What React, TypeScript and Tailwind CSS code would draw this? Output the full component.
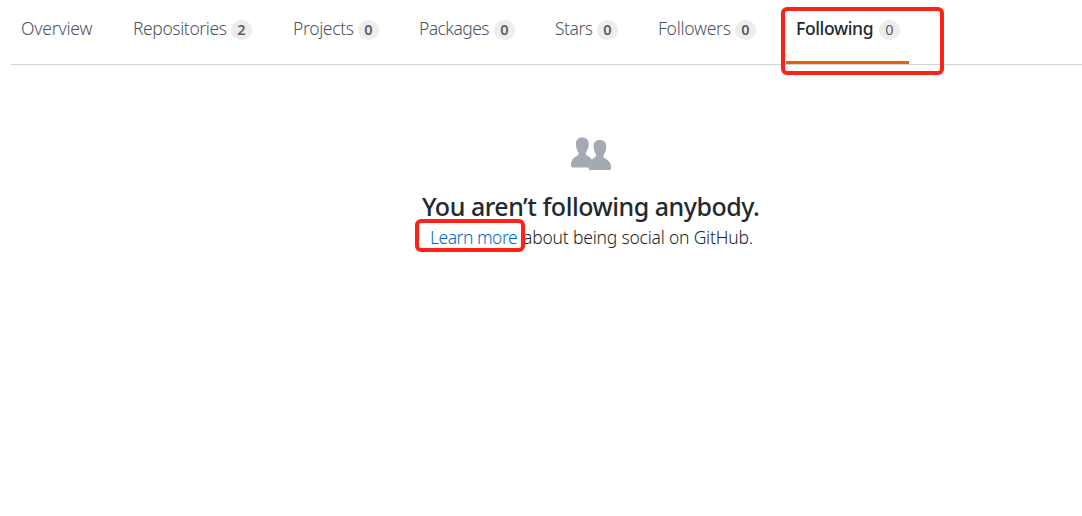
const tabs = [
  { label: 'Overview', item: 'w-[112px]', text: 'w-[73px] tracking-[-0.2px]' },
  { label: 'Repositories', count: 2, item: 'w-[160px]', text: 'w-[98px] tracking-[-0.4px]' },
  { label: 'Projects', count: 0, item: 'w-[126px]', text: 'w-[65px] tracking-[-0.35px]' },
  { label: 'Packages', count: 0, item: 'w-[136px]', text: 'w-[75px] tracking-[-0.55px]' },
  { label: 'Stars', count: 0, item: 'w-[103px]', text: 'w-[42px] tracking-[-0.5px]' },
  { label: 'Followers', count: 0, item: 'w-[128px]', text: 'w-[77px] tracking-[-0.25px]' },
];

function Counter({ value, active = false }: { value: number; active?: boolean }) {
  return (
    <span
      className={`mt-[5px] flex h-5 w-[21px] shrink-0 items-center justify-center rounded-full bg-[#ededee] pb-[2px] text-[14.5px] leading-[18px] text-[#586069] ${active ? 'font-normal' : 'font-semibold'}`}
    >
      {value}
    </span>
  );
}

function PeopleIcon() {
  return (
    <svg className="h-[34px] w-[42px]" viewBox="0 0 42 34" fill="#a3aab1">
      <path d="M12.300.6C8.300.6 6 2.900 6 7c0 3.500.7 6 2.400 8.200.5 1.700.1 2.700-1.200 3.500C3.900 20.500 1 22.500 1 28.500c0 1.400.7 2 2 2h16l3-7.700c-1.400-2.200-3.400-3.300-5-4.200-1.200-.7-1.500-1.700-1-3.400 1.700-2.200 2.700-4.700 2.700-8.200C18.700 2.900 16.300.6 12.300.6Z" />
      <path d="M29.800 3c-4 0-6.200 2.300-6.200 6.300 0 3.300.7 5.600 2.300 7.700.5 1.700.1 2.600-1.200 3.400-1 .6-1.800 1.200-2.700 2.400 0 0-3.400 3-3.400 8.200 0 1.400.7 2 2 2h18.600c1.300 0 1.900-.7 1.900-2 0-5.500-2.800-7.900-6.200-9.700-1.300-.8-1.700-1.900-1.200-3.600 1.600-2.100 2.500-4.800 2.500-8.300 0-4.100-2.300-6.400-6.400-6.400Z" />
    </svg>
  );
}

export default function App() {
  return (
    <main className="relative h-[516px] w-[1082px] overflow-hidden bg-white font-['Noto_Sans','Open_Sans',sans-serif] text-[#24292e]">
      <nav className="ml-[11px] flex h-[65px] border-b border-[#d1d5da] pl-[10px] text-[17.5px] leading-[26px] whitespace-nowrap text-[#586069]">
        {tabs.map((tab) => (
          <a key={tab.label} className={`flex shrink-0 pt-[15px] ${tab.item}`}>
            <span className={`shrink-0 font-light text-[#4b535c] ${tab.text}`}>{tab.label}</span>
            {tab.count !== undefined && <Counter value={tab.count} />}
          </a>
        ))}
        <a className="flex h-16 w-[123px] border-b-[3px] border-[#e36209] pt-[15px] pl-[10px]">
          <span className="w-[83px] shrink-0 font-medium tracking-[-0.35px] text-[#24292e]">Following</span>
          <Counter value={0} active />
        </a>
      </nav>

      <section className="flex flex-col pt-[72px]">
        <div className="ml-[570px]">
          <PeopleIcon />
        </div>
        <h3 className="mt-[17px] ml-[422px] text-[25px] leading-[36px] font-medium tracking-[-0.48px] whitespace-nowrap">
          You aren’t following anybody.
        </h3>
        <p className="ml-[430px] flex text-[17.5px] leading-[26px] font-light whitespace-nowrap">
          <a className="w-[93px] shrink-0 tracking-[-0.5px] text-[#0366d6]">Learn more</a>
          <span className="tracking-[-0.2px] text-[#1b1f23]">about being social on GitHub.</span>
        </p>
      </section>

      <div className="absolute top-[7px] left-[781px] h-[68px] w-[163px] rounded-[6px] border-4 border-[#ff2116]" />
      <div className="absolute top-[219px] left-[415px] h-[33px] w-[110px] rounded-[6px] border-4 border-[#ff2116]" />
    </main>
  );
}
